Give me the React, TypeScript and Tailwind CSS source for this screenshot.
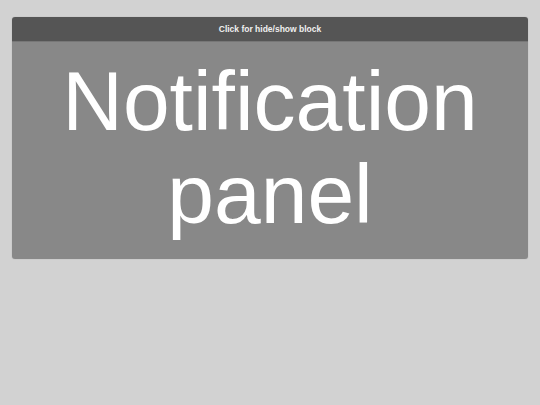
import React, { useState } from 'react';

export default function App() {
  const [open, setOpen] = useState(true);

  return (
    <div className="min-h-screen bg-[#d2d2d2] pt-[17px] px-3 font-['Liberation_Sans',Arial,sans-serif]">
      <div className="rounded-[3px] overflow-hidden shadow-[0_0_1px_rgba(0,0,0,0.3)]">
        <button
          onClick={() => setOpen(!open)}
          className="w-full h-[25px] bg-[#555555] text-[#f0f0f0] text-[8.5px] font-bold flex items-center justify-center border-b border-[#777]"
        >
          Click for hide/show block
        </button>
        {open && (
          <div className="bg-[#888888] h-[217px] pt-[13px] text-center text-white text-[84px] leading-[93px]">
            Notification panel
          </div>
        )}
      </div>
    </div>
  );
}
